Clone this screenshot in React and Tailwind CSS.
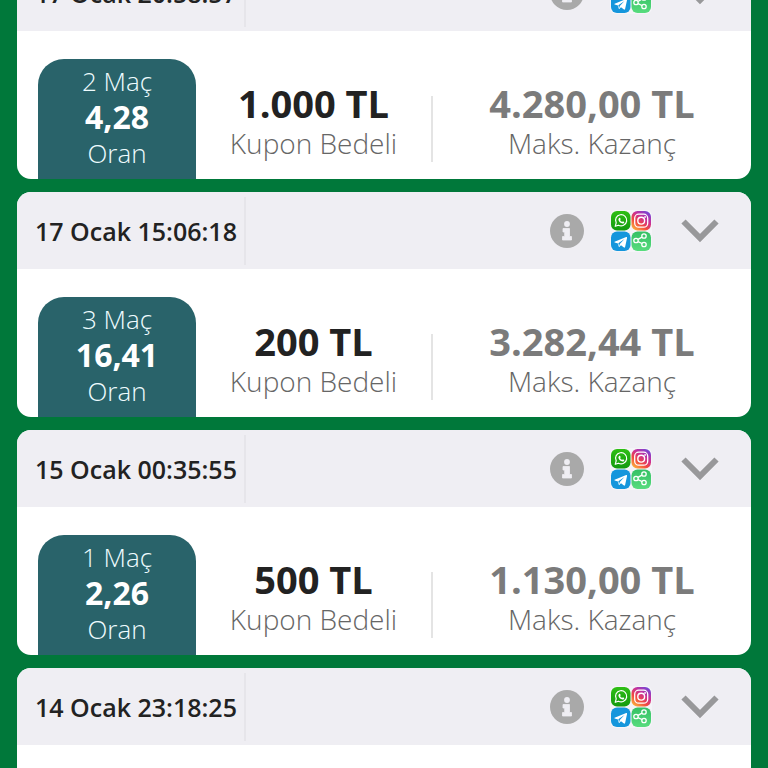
const coupons = [
  { id: 1, date: "17 Ocak 20:58:57", matches: 2, odds: "4,28", stake: "1.000 TL", maxWin: "4.280,00 TL" },
  { id: 2, date: "17 Ocak 15:06:18", matches: 3, odds: "16,41", stake: "200 TL", maxWin: "3.282,44 TL" },
  { id: 3, date: "15 Ocak 00:35:55", matches: 1, odds: "2,26", stake: "500 TL", maxWin: "1.130,00 TL" },
  { id: 4, date: "14 Ocak 23:18:25" },
];

function InfoIcon() {
  return (
    <svg viewBox="0 0 34 34" className="size-[34px]" aria-hidden="true">
      <circle cx="17" cy="17" r="17" fill="#a9a9a9" />
      <circle cx="17" cy="10" r="2.9" fill="#efeef3" />
      <path d="M13 14.5h6.500v8h2v3.500h-9v-3.500h2.200V18H13z" fill="#efeef3" stroke="#efeef3" strokeWidth="0.8" strokeLinejoin="round" />
    </svg>
  );
}

function ShareIcon({ id }) {
  return (
    <svg viewBox="0 0 42 42" className="size-[42px]" aria-hidden="true">
      <defs>
        <linearGradient id={`wa-${id}`} x1="0" y1="0" x2="0" y2="1">
          <stop offset="0" stopColor="#2fbf14" />
          <stop offset="1" stopColor="#139a10" />
        </linearGradient>
        <linearGradient id={`ig-${id}`} x1="0.15" y1="1" x2="0.85" y2="0">
          <stop offset="0" stopColor="#fdb63c" />
          <stop offset="0.35" stopColor="#f2483f" />
          <stop offset="0.65" stopColor="#c8309a" />
          <stop offset="1" stopColor="#6a48dc" />
        </linearGradient>
        <linearGradient id={`sh-${id}`} x1="0" y1="0" x2="0" y2="1">
          <stop offset="0" stopColor="#35c064" />
          <stop offset="1" stopColor="#58dc7e" />
        </linearGradient>
      </defs>
      <rect width="42" height="42" rx="6" fill="#f5f4f8" />

      {/* whatsapp */}
      <rect x="1" y="1" width="19.5" height="19.5" rx="6" fill={`url(#wa-${id})`} />
      <path d="M5.2 16.3l1-3.400a5.600 5.600 0 1 1 2.300 2.300z" fill="none" stroke="#fff" strokeWidth="1.2" strokeLinejoin="round" />
      <path d="M9 8.200c.6-.7 1.100-.5 1.400.2l.3.8-.6.9c.5 1 1.100 1.500 2 1.900l.8-.7 1.300.7c.1 1-.8 1.700-1.700 1.600-2-.3-3.900-2.200-4.100-4.100 0-.5.2-.9.6-1.300z" fill="#fff" />

      {/* instagram */}
      <rect x="21.5" y="1" width="19.5" height="19.5" rx="6" fill={`url(#ig-${id})`} />
      <rect x="24.7" y="4.200" width="13" height="13" rx="4" fill="none" stroke="#fff" strokeWidth="1.3" />
      <circle cx="31.2" cy="10.7" r="3.4" fill="none" stroke="#fff" strokeWidth="1.4" />
      <circle cx="35.1" cy="6.900" r="0.900" fill="#fff" />

      {/* telegram */}
      <rect x="1" y="21.5" width="19.5" height="19.5" rx="6" fill="#1596dc" />
      <path d="M4.600 31.700l11.600-4.700c.6-.2 1 .1.9.8l-2 9.200c-.2.700-.6.800-1.100.5l-3-2.200-1.500 1.500c-.3.300-.7.200-.8-.3l-.7-3.100-3.300-1c-.5-.2-.5-.5-.1-.7z" fill="#fff" />
      <path d="M8.300 33.300l6.200-4.300-4.700 4.900-.5 2.200z" fill="#1596dc" />

      {/* share */}
      <rect x="21.5" y="21.5" width="19.5" height="19.5" rx="6" fill={`url(#sh-${id})`} />
      <g fill="none" stroke="#fff" strokeWidth="1.300">
        <circle cx="26" cy="30.500" r="2.200" />
        <circle cx="34" cy="26" r="2.200" />
        <circle cx="34" cy="34.500" r="2.200" />
        <path d="M28 29.400l4-2.300M28 31.600l4 1.900" />
      </g>
    </svg>
  );
}

function ChevronIcon() {
  return (
    <svg viewBox="0 0 40 28" className="h-[28px] w-[40px]" aria-hidden="true">
      <path d="M3.500 4.500L20 21 36.500 4.500" fill="none" stroke="#98989a" strokeWidth="6" />
    </svg>
  );
}

function CouponHeader({ coupon }) {
  return (
    <div className="flex h-[77px] items-center bg-[#efeef3] pr-[31px]">
      <div className="flex h-[68px] w-[229px] items-center border-r-2 border-[#e6e5ea] pt-0.5 pl-[18px]">
        <time className="text-[25px] font-semibold whitespace-nowrap text-[#222]">{coupon.date}</time>
      </div>
      <div className="ml-auto flex items-center">
        <button type="button" aria-label="Bilgi">
          <InfoIcon />
        </button>
        <button type="button" aria-label="Paylaş" className="ml-[26px]">
          <ShareIcon id={coupon.id} />
        </button>
        <button type="button" aria-label="Kupon detayı" className="ml-7">
          <ChevronIcon />
        </button>
      </div>
    </div>
  );
}

function CouponSummary({ coupon }) {
  return (
    <div className="flex h-[148px] items-end pl-[21px]">
      <div className="w-[158px] rounded-t-[26px] bg-[#29636a] pt-1 pb-2 text-center text-[26px] leading-9 font-light text-[#effcff]">
        <p>{coupon.matches} Maç</p>
        <p className="text-[32px] font-bold text-white">{coupon.odds}</p>
        <p>Oran</p>
      </div>
      <div className="w-[235px] pb-4 text-center leading-10">
        <p className="text-[38px] font-bold text-[#222]">{coupon.stake}</p>
        <p className="text-[28px] font-light text-[#666]">Kupon Bedeli</p>
      </div>
      <div className="mb-[17px] h-[66px] w-0.5 bg-[#e4e4e4]" />
      <div className="flex-1 pb-4 text-center leading-10">
        <p className="text-[38px] font-bold text-[#7b7b7b]">{coupon.maxWin}</p>
        <p className="text-[28px] font-light text-[#666]">Maks. Kazanç</p>
      </div>
    </div>
  );
}

export default function App() {
  return (
    <main className="h-screen overflow-hidden bg-[#00783a] px-[17px] font-['Open_Sans','Noto_Sans',sans-serif]">
      <ul className="-mt-[46px] flex flex-col gap-[13px]">
        {coupons.map((coupon) => (
          <li key={coupon.id} className="min-h-[225px] overflow-hidden rounded-[14px] bg-white">
            <CouponHeader coupon={coupon} />
            {coupon.odds && <CouponSummary coupon={coupon} />}
          </li>
        ))}
      </ul>
    </main>
  );
}
